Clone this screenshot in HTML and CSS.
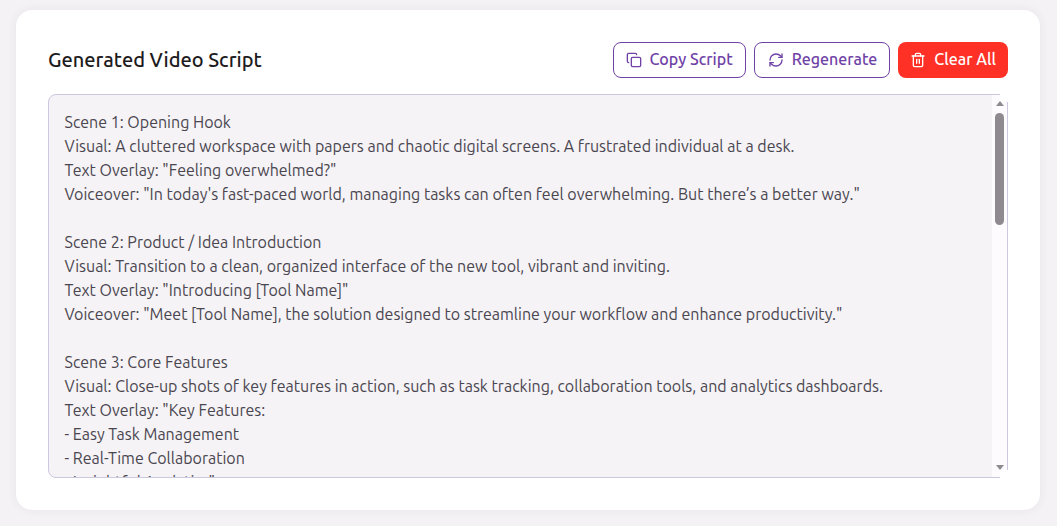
FILE: index.html
```html
<!DOCTYPE html>
<html lang="en">
<head>
    <meta charset="UTF-8">
    <meta name="viewport" content="width=device-width, initial-scale=1.0">
    <title>Generated Video Script</title>
    <link rel="stylesheet" href="styles.css">
</head>
<body>
    <div class="card">
        <div class="card-header">
            <h2>Generated Video Script</h2>
            <div class="actions">
                <button class="btn btn-outline btn-copy">
                    <svg viewBox="0 0 24 24"><rect x="8" y="8" width="14" height="14" rx="2"/><path d="M4 16c-1.1 0-2-.9-2-2V4c0-1.1.9-2 2-2h10c1.1 0 2 .9 2 2"/></svg>
                    <span>Copy Script</span>
                </button>
                <button class="btn btn-outline btn-regen">
                    <svg viewBox="0 0 24 24"><path d="M3 12a9 9 0 0 1 9-9 9.75 9.75 0 0 1 6.74 2.74L21 8"/><path d="M21 3v5h-5"/><path d="M21 12a9 9 0 0 1-9 9 9.75 9.75 0 0 1-6.74-2.74L3 16"/><path d="M8 16H3v5"/></svg>
                    <span>Regenerate</span>
                </button>
                <button class="btn btn-danger">
                    <svg viewBox="0 0 24 24"><path d="M3 6h18"/><path d="M19 6v14c0 1-1 2-2 2H7c-1 0-2-1-2-2V6"/><path d="M8 6V4c0-1 1-2 2-2h4c1 0 2 1 2 2v2"/><path d="M10 11v6"/><path d="M14 11v6"/></svg>
                    <span>Clear All</span>
                </button>
            </div>
        </div>
        <div class="script-wrap">
            <textarea class="script-box" readonly>Scene 1: Opening Hook
Visual: A cluttered workspace with papers and chaotic digital screens. A frustrated individual at a desk.
Text Overlay: "Feeling overwhelmed?"
Voiceover: "In today's fast-paced world, managing tasks can often feel overwhelming. But there’s a better way."

Scene 2: Product / Idea Introduction
Visual: Transition to a clean, organized interface of the new tool, vibrant and inviting.
Text Overlay: "Introducing [Tool Name]"
Voiceover: "Meet [Tool Name], the solution designed to streamline your workflow and enhance productivity."

Scene 3: Core Features
Visual: Close-up shots of key features in action, such as task tracking, collaboration tools, and analytics dashboards.
Text Overlay: "Key Features:
- Easy Task Management
- Real-Time Collaboration
- Insightful Analytics"
Voiceover: "With easy task management, real-time collaboration, and insightful analytics, your team stays on track."

Scene 4: Benefits
Visual: Happy team members working together and hitting their goals.
Text Overlay: "Work Smarter, Not Harder"
Voiceover: "Spend less time organizing and more time getting things done."

Scene 5: Social Proof
Visual: Customer testimonials and logos of companies using the tool.
Text Overlay: "Trusted by Teams Everywhere"
Voiceover: "Thousands of teams already rely on [Tool Name] every day."

Scene 6: Call to Action
Visual: The product logo with a sign-up button on screen.
Text Overlay: "Try [Tool Name] Today"
Voiceover: "Get started for free and take control of your work."</textarea>
            <div class="scrollbar">
                <div class="arrow-up"></div>
                <div class="thumb"></div>
                <div class="arrow-down"></div>
            </div>
        </div>
    </div>
</body>
</html>
```

FILE: styles.css
```css
* {
    box-sizing: border-box;
}
body {
    font-family: Ubuntu, "Noto Sans", sans-serif;
    margin: 0;
    padding: 10px 17px 16px 16px;
    height: 100vh;
    background-color: #f4f2f5;
    overflow: hidden;
}
.card {
    height: 500px;
    padding: 32px;
    background-color: white;
    border-radius: 16px;
    box-shadow: 0 0 10px rgba(70, 50, 90, 0.07);
}
.card-header {
    display: flex;
    justify-content: space-between;
    align-items: center;
    margin-bottom: 16px;
}
h2 {
    margin: 0 0 2px;
    font-size: 20px;
    font-weight: 500;
    color: #1d1b20;
}
.actions {
    display: flex;
    gap: 8px;
}
.btn {
    display: flex;
    align-items: center;
    justify-content: center;
    gap: 8px;
    height: 36px;
    padding: 0 12px;
    font-family: inherit;
    font-size: 16px;
    font-weight: 500;
    border-radius: 8px;
    cursor: pointer;
}
.btn span {
    margin-bottom: 2px;
}
.btn svg {
    width: 16px;
    height: 16px;
    fill: none;
    stroke: currentColor;
    stroke-width: 2;
    stroke-linecap: round;
    stroke-linejoin: round;
}
.btn-outline {
    background-color: white;
    color: #6f42a6;
    border: 1px solid #6f42a6;
}
.btn-copy {
    gap: 7.5px;
}
.btn-regen {
    padding-left: 13px;
}
.btn-danger {
    background-color: #ff3126;
    color: white;
    border: none;
}
.script-wrap {
    position: relative;
    height: 384px;
}
.script-box {
    display: block;
    width: 100%;
    height: 100%;
    padding: 15px 31px 15px 15.5px;
    font-family: inherit;
    font-size: 16px;
    line-height: 24px;
    color: #4a4650;
    background-color: #f5f3f5;
    border: 1px solid #cdc7e0;
    border-radius: 8px;
    resize: none;
    outline: none;
    overflow-y: hidden;
}
/* scrollbars are hidden in the capture, so this one is drawn */
.scrollbar {
    position: absolute;
    top: 1px;
    right: 1px;
    bottom: 1px;
    width: 15px;
    display: flex;
    flex-direction: column;
    align-items: center;
    padding-bottom: 7px;
    background-color: #fdfbfe;
}
.scrollbar::before,
.scrollbar::after {
    content: "";
    position: absolute;
    right: -1px;
    width: 8px;
    height: 8px;
    background-color: white;
}
.scrollbar::before {
    top: -1px;
}
.scrollbar::after {
    bottom: -1px;
}
.arrow-up,
.arrow-down {
    width: 0;
    height: 0;
    position: relative;
    z-index: 1;
    border-left: 4.5px solid transparent;
    border-right: 4.5px solid transparent;
}
.arrow-up {
    margin-top: 6px;
    border-bottom: 5px solid #8e8a8f;
}
.arrow-down {
    margin-top: auto;
    border-top: 5px solid #8e8a8f;
}
.thumb {
    width: 9px;
    height: 112px;
    margin-top: 7px;
    background-color: #8e8a8f;
    border-radius: 5px;
}
```
